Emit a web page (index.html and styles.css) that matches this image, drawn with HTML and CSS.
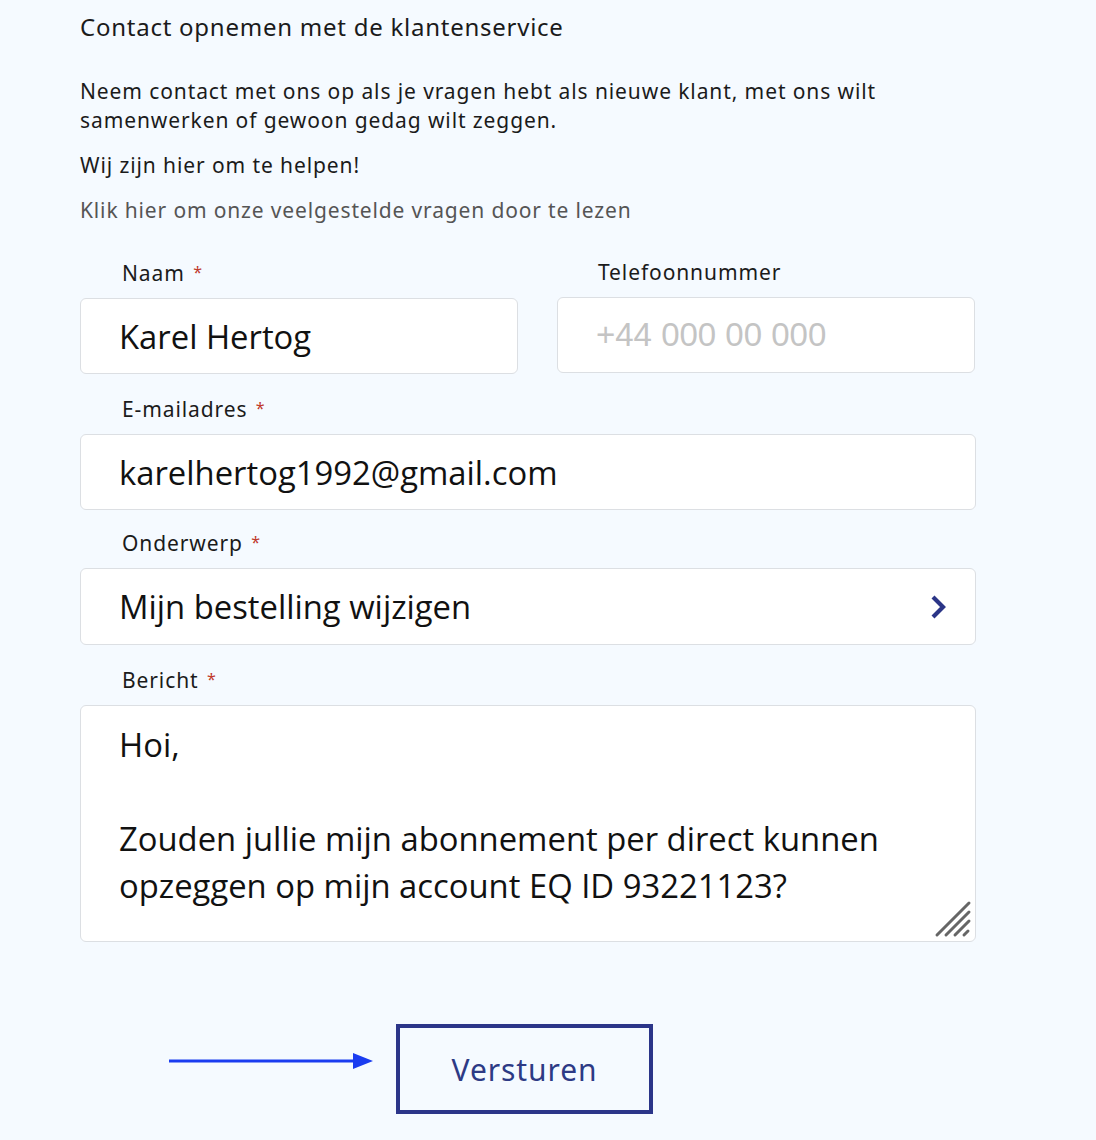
FILE: index.html
```html
<!DOCTYPE html>
<html lang="nl">
<head>
<meta charset="utf-8">
<title>Contact opnemen met de klantenservice</title>
<link rel="stylesheet" href="styles.css">
</head>
<body>
<main class="page">
  <h1 class="title">Contact opnemen met de klantenservice</h1>
  <p class="intro">Neem contact met ons op als je vragen hebt als nieuwe klant, met ons wilt samenwerken of gewoon gedag wilt zeggen.</p>
  <p class="intro help">Wij zijn hier om te helpen!</p>
  <p class="faq">Klik hier om onze veelgestelde vragen door te lezen</p>

  <form class="form">
    <div class="row two">
      <div class="field">
        <label class="label">Naam <span class="req">*</span></label>
        <div class="input"><span class="value">Karel Hertog</span></div>
      </div>
      <div class="field">
        <label class="label">Telefoonnummer</label>
        <div class="input phone"><span class="placeholder">+44 000 00 000</span></div>
      </div>
    </div>
    <div class="field">
      <label class="label">E-mailadres <span class="req">*</span></label>
      <div class="input"><span class="value">karelhertog1992@gmail.com</span></div>
    </div>
    <div class="field tight">
      <label class="label">Onderwerp <span class="req">*</span></label>
      <div class="input select"><span class="value">Mijn bestelling wijzigen</span>
        <svg class="chev" width="20" height="26" viewBox="0 0 20 26"><path d="M4 3 L14 13 L4 23" fill="none" stroke="#2b3587" stroke-width="4.2" stroke-linejoin="miter"/></svg>
      </div>
    </div>
    <div class="field">
      <label class="label">Bericht <span class="req">*</span></label>
      <div class="input textarea"><span class="value">Hoi,<br><br>Zouden jullie mijn abonnement per direct kunnen<br>opzeggen op mijn account EQ ID 93221123?</span>
        <svg class="grip" width="40" height="40" viewBox="0 0 40 40"><g stroke="#666" stroke-width="3" stroke-linecap="round"><line x1="4" y1="36" x2="36" y2="4"/><line x1="13" y1="36" x2="36" y2="13"/><line x1="22" y1="36" x2="36" y2="22"/><line x1="31" y1="36" x2="35" y2="32"/></g></svg>
      </div>
    </div>
    <div class="actions">
      <svg class="arrow" width="206" height="20" viewBox="0 0 206 20"><line x1="0" y1="10" x2="186" y2="10" stroke="#1a3cf0" stroke-width="3"/><path d="M184 2 L204 10 L184 18 Z" fill="#1a3cf0"/></svg>
      <button type="button" class="submit">Versturen</button>
    </div>
  </form>
</main>
</body>
</html>
```

FILE: styles.css
```css
* { box-sizing: border-box; }
body {
  margin: 0;
  background: #f5faff;
  font-family: "Noto Sans", "Lato", sans-serif;
  color: #1b1b1b;
}
.page {
  width: 976px;
  padding: 12px 0 0 80px;
}
.title {
  margin: 0;
  font-size: 24px;
  font-weight: 400;
  line-height: 30px;
  letter-spacing: 0.75px;
}
.intro {
  margin: 35px 0 0;
  font-size: 21px;
  line-height: 29px;
  letter-spacing: 0.9px;
  width: 820px;
}
.intro.help { margin-top: 16px; }
.faq {
  margin: 16px 0 0;
  font-size: 21px;
  line-height: 29px;
  letter-spacing: 0.85px;
  color: #555;
}
.form {
  margin-top: 35px;
  display: flex;
  flex-direction: column;
  gap: 22px;
}
.field.tight { margin-top: -2px; }
.row.two {
  display: grid;
  grid-template-columns: 438px 418px;
  column-gap: 39px;
}
.field {
  display: flex;
  flex-direction: column;
  gap: 13px;
}
.label {
  padding-left: 42px;
  font-size: 21px;
  line-height: 24px;
  letter-spacing: 0.9px;
  color: #1b1b1b;
}
.row.two .field:nth-child(2) .label { padding-left: 41px; }
.req {
  color: #c0392b;
  font-size: 16px;
  vertical-align: 3px;
  margin-left: 2px;
  letter-spacing: 0;
}
.input {
  position: relative;
  height: 76px;
  background: #fff;
  border: 1px solid #dcdfe3;
  border-radius: 6px;
  padding: 0 0 0 38px;
  display: flex;
  align-items: center;
}
.value {
  font-family: "Open Sans", sans-serif;
  font-size: 32.8px;
  color: #111;
  line-height: 47px;
}
.placeholder {
  font-family: "Liberation Sans", Arial, sans-serif;
  font-size: 33px;
  color: #c4c4c4;
}
.select { height: 77px; }
.chev {
  position: absolute;
  right: 26px;
  top: 25px;
}
.textarea {
  height: 237px;
  align-items: flex-start;
  padding-top: 15px;
}
.grip {
  position: absolute;
  right: 2px;
  bottom: 2px;
}
.actions {
  position: relative;
  margin-top: 60px;
  padding-left: 316px;
  height: 90px;
}
.arrow {
  position: absolute;
  left: 89px;
  top: 27px;
}
.submit {
  width: 257px;
  height: 90px;
  background: transparent;
  border: 4px solid #2b3589;
  border-radius: 0;
  font-family: "Noto Sans", "Lato", sans-serif;
  font-size: 30px;
  letter-spacing: 0.9px;
  color: #2d3a85;
}
```
